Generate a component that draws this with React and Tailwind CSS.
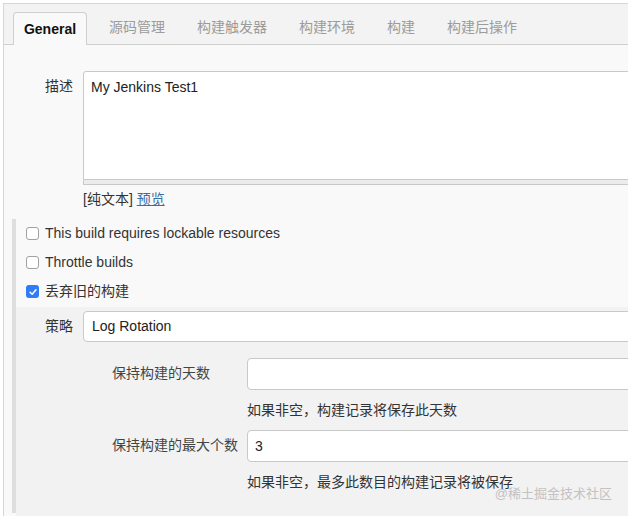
import React from "react";

const tabs = ["源码管理", "构建触发器", "构建环境", "构建", "构建后操作"];

const Checkbox = ({ checked }) =>
  checked ? (
    <span className="flex h-[13px] w-[13px] items-center justify-center rounded-[3px] bg-[#2f7cf6]">
      <svg viewBox="0 0 12 12" className="h-[10px] w-[10px]">
        <path d="M2.5 6.3 L5 8.7 L9.6 3.4" fill="none" stroke="#fff" strokeWidth="1.8" strokeLinecap="round" strokeLinejoin="round" />
      </svg>
    </span>
  ) : (
    <span className="h-[13px] w-[13px] rounded-[3px] border border-[#a0a0a0] bg-white" />
  );

const CheckRow = ({ checked, label }) => (
  <div className="flex h-[29px] items-center pl-[10px]">
    <Checkbox checked={checked} />
    <span className="ml-[6px] text-[14px] text-[#333]">{label}</span>
  </div>
);

const NestedField = ({ label, value, help }) => (
  <div>
    <div className="flex items-start">
      <div className="w-[135px] pt-[5px] text-[14px] leading-5 text-[#444]">{label}</div>
      <div className="flex h-[32px] flex-1 items-center rounded-[4px] border border-[#c9c9c9] bg-white pl-[7px] text-[14px] text-[#222]">
        {value}
      </div>
    </div>
    <div className="ml-[135px] mt-[10px] text-[14px] leading-5 text-[#333]">{help}</div>
  </div>
);

export default function App() {
  return (
    <div className="relative h-[516px] w-[628px] overflow-hidden bg-white font-['Liberation_Sans','Noto_Sans_CJK_SC',sans-serif]">
      <div className="ml-[3px] mt-[3px] h-[513px] w-[680px] border-l border-t border-[#d6d6d6] bg-[#f9f9f9]">
        {/* Tabs */}
        <div className="flex h-[41px] items-end border-b border-[#cfcfcf] bg-[#f3f3f3] pl-[9px]">
          <div className="-mb-px flex h-[33px] w-[74px] items-center justify-center rounded-t-[4px] border border-b-0 border-[#cfcfcf] bg-[#f9f9f9] text-[14px] font-bold text-[#111]">
            General
          </div>
          <div className="ml-[22px] flex gap-8">
            {tabs.map((t) => (
              <div key={t} className="flex h-[33px] items-center text-[14px] text-[#9b9b9b]">
                {t}
              </div>
            ))}
          </div>
        </div>

        {/* Description */}
        <div className="flex pt-[26px]">
          <div className="mr-[10px] w-[69px] pt-[7px] text-right text-[14px] leading-[17px] text-[#333]">描述</div>
          <div className="flex-1">
            <div className="h-[109px] rounded-t-[3px] border border-[#c9c9c9] bg-white px-[7px] pt-[7px] text-[14px] leading-[17px] text-[#222]">
              My Jenkins Test1
            </div>
            <div className="h-[5px] border-x border-b border-[#c9c9c9] bg-[#ececec]" />
            <div className="mt-[4px] text-[14px] leading-5 text-[#333]">
              [纯文本] <span className="text-[#3a6ea5] underline">预览</span>
            </div>
          </div>
        </div>

        {/* Options */}
        <div className="ml-[8px] mt-[10px] h-[294px] border-l-4 border-[#dedede]">
          <CheckRow label="This build requires lockable resources" />
          <CheckRow label="Throttle builds" />
          <CheckRow checked label="丢弃旧的构建" />

          <div className="mt-[1px] h-full bg-[#f2f2f2] pt-[4px]">
            <div className="flex items-center">
              <div className="mr-[10px] w-[57px] text-right text-[14px] text-[#333]">策略</div>
              <div className="flex h-[31px] flex-1 items-center rounded-[4px] border border-[#c9c9c9] bg-white pl-[8px] text-[14px] text-[#222]">
                Log Rotation
              </div>
            </div>
            <div className="mt-[16px] flex flex-col gap-[10px] pl-[96px]">
              <NestedField label="保持构建的天数" value="" help="如果非空，构建记录将保存此天数" />
              <NestedField label="保持构建的最大个数" value="3" help="如果非空，最多此数目的构建记录将被保存" />
            </div>
          </div>
        </div>
      </div>

      <div className="absolute right-[16px] top-[484px] text-[13px] text-[#c2c2c2]">@稀土掘金技术社区</div>
    </div>
  );
}
